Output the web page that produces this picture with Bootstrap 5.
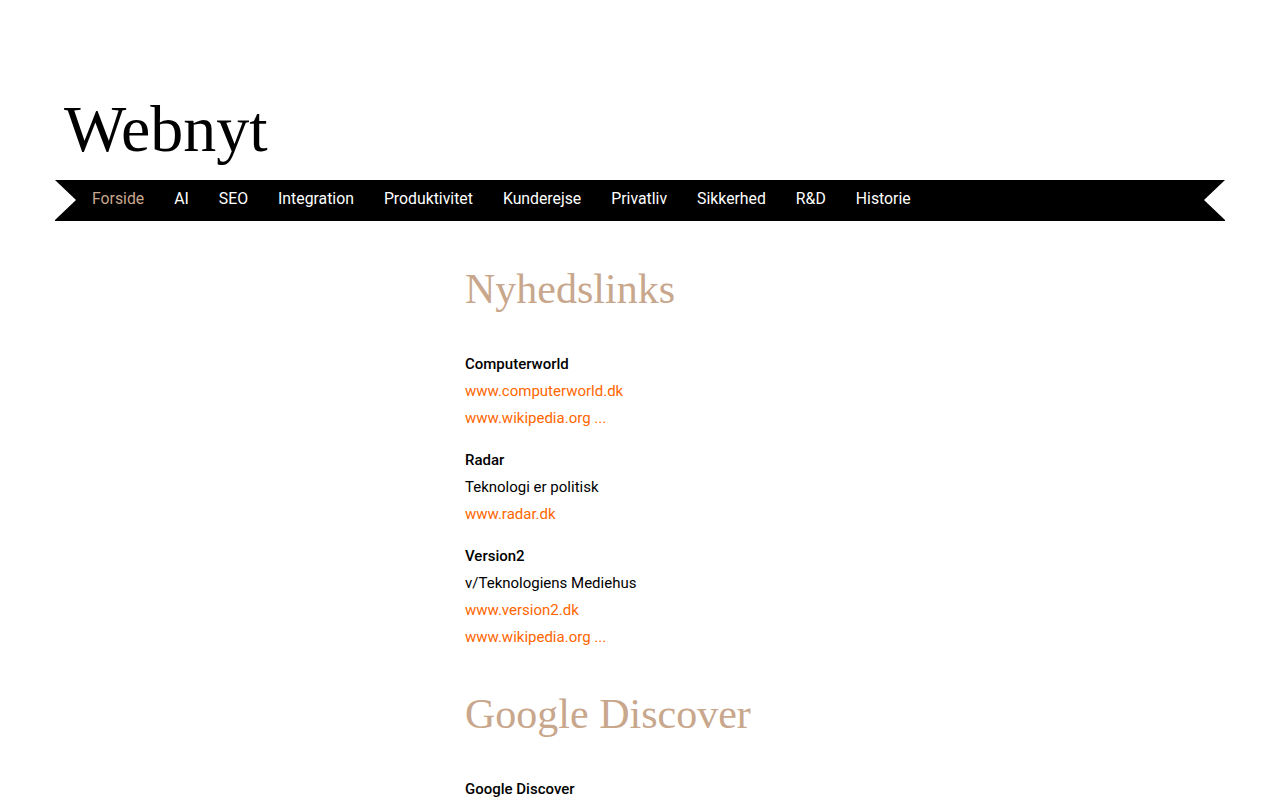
<!DOCTYPE html>
<html lang="da">
<head>
<meta charset="UTF-8">
<title>Webnyt</title>
<link href="https://cdn.jsdelivr.net/npm/bootstrap@5.3.0/dist/css/bootstrap.min.css" rel="stylesheet">
<style>
body { font-family: Roboto, "Liberation Sans", sans-serif; font-size: 16px; color: #000; overflow: hidden; height: 800px; }
.site-wrap { padding: 90px 55px 0; }
.site-title { font-family: "Liberation Serif", serif; font-size: 66px; line-height: 78px; height: 90px; padding-left: 9px; color: #000; margin: 0; font-weight: 400; }
.ribbon { height: 41px; background: #000; position: relative; padding-left: 22px; }
.ribbon::before, .ribbon::after { content: ""; position: absolute; top: 0; border-style: solid; border-color: transparent; border-width: 20.5px 21px; }
.ribbon::before { left: 0; border-left-color: #fff; }
.ribbon::after { right: 0; border-right-color: #fff; }
.ribbon a { color: #fff; text-decoration: none; padding: 0 15px; line-height: 37px; font-size: 15.8px; }
.ribbon a.active { color: #c8a78d; }
.main-col { margin-left: 410px; padding-top: 40px; font-size: 15px; }
.main-col h2 { font-family: "Liberation Serif", serif; color: #c8a78d; font-size: 42px; line-height: 56px; margin: 0 0 34px; font-weight: 400; }
.main-col p { line-height: 27px; margin: 0 0 15px; }
.main-col a { color: #f60; text-decoration: none; }
.main-col strong { font-weight: 500; }
.main-col h2.sec-gap { margin-top: 35px; }
</style>
</head>
<body>
<div class="site-wrap">
    <h1 class="site-title">Webnyt</h1>
    <nav class="ribbon d-flex">
        <a class="active" href="#">Forside</a>
        <a href="#">AI</a>
        <a href="#">SEO</a>
        <a href="#">Integration</a>
        <a href="#">Produktivitet</a>
        <a href="#">Kunderejse</a>
        <a href="#">Privatliv</a>
        <a href="#">Sikkerhed</a>
        <a href="#">R&amp;D</a>
        <a href="#">Historie</a>
    </nav>
    <div class="main-col">
        <h2>Nyhedslinks</h2>
        <p><strong>Computerworld</strong><br><a href="#">www.computerworld.dk</a><br><a href="#">www.wikipedia.org ...</a></p>
        <p><strong>Radar</strong><br>Teknologi er politisk<br><a href="#">www.radar.dk</a></p>
        <p><strong>Version2</strong><br>v/Teknologiens Mediehus<br><a href="#">www.version2.dk</a><br><a href="#">www.wikipedia.org ...</a></p>
        <h2 class="sec-gap">Google Discover</h2>
        <p><strong>Google Discover</strong></p>
    </div>
</div>
<script src="https://cdn.jsdelivr.net/npm/bootstrap@5.3.0/dist/js/bootstrap.bundle.min.js"></script>
</body>
</html>
